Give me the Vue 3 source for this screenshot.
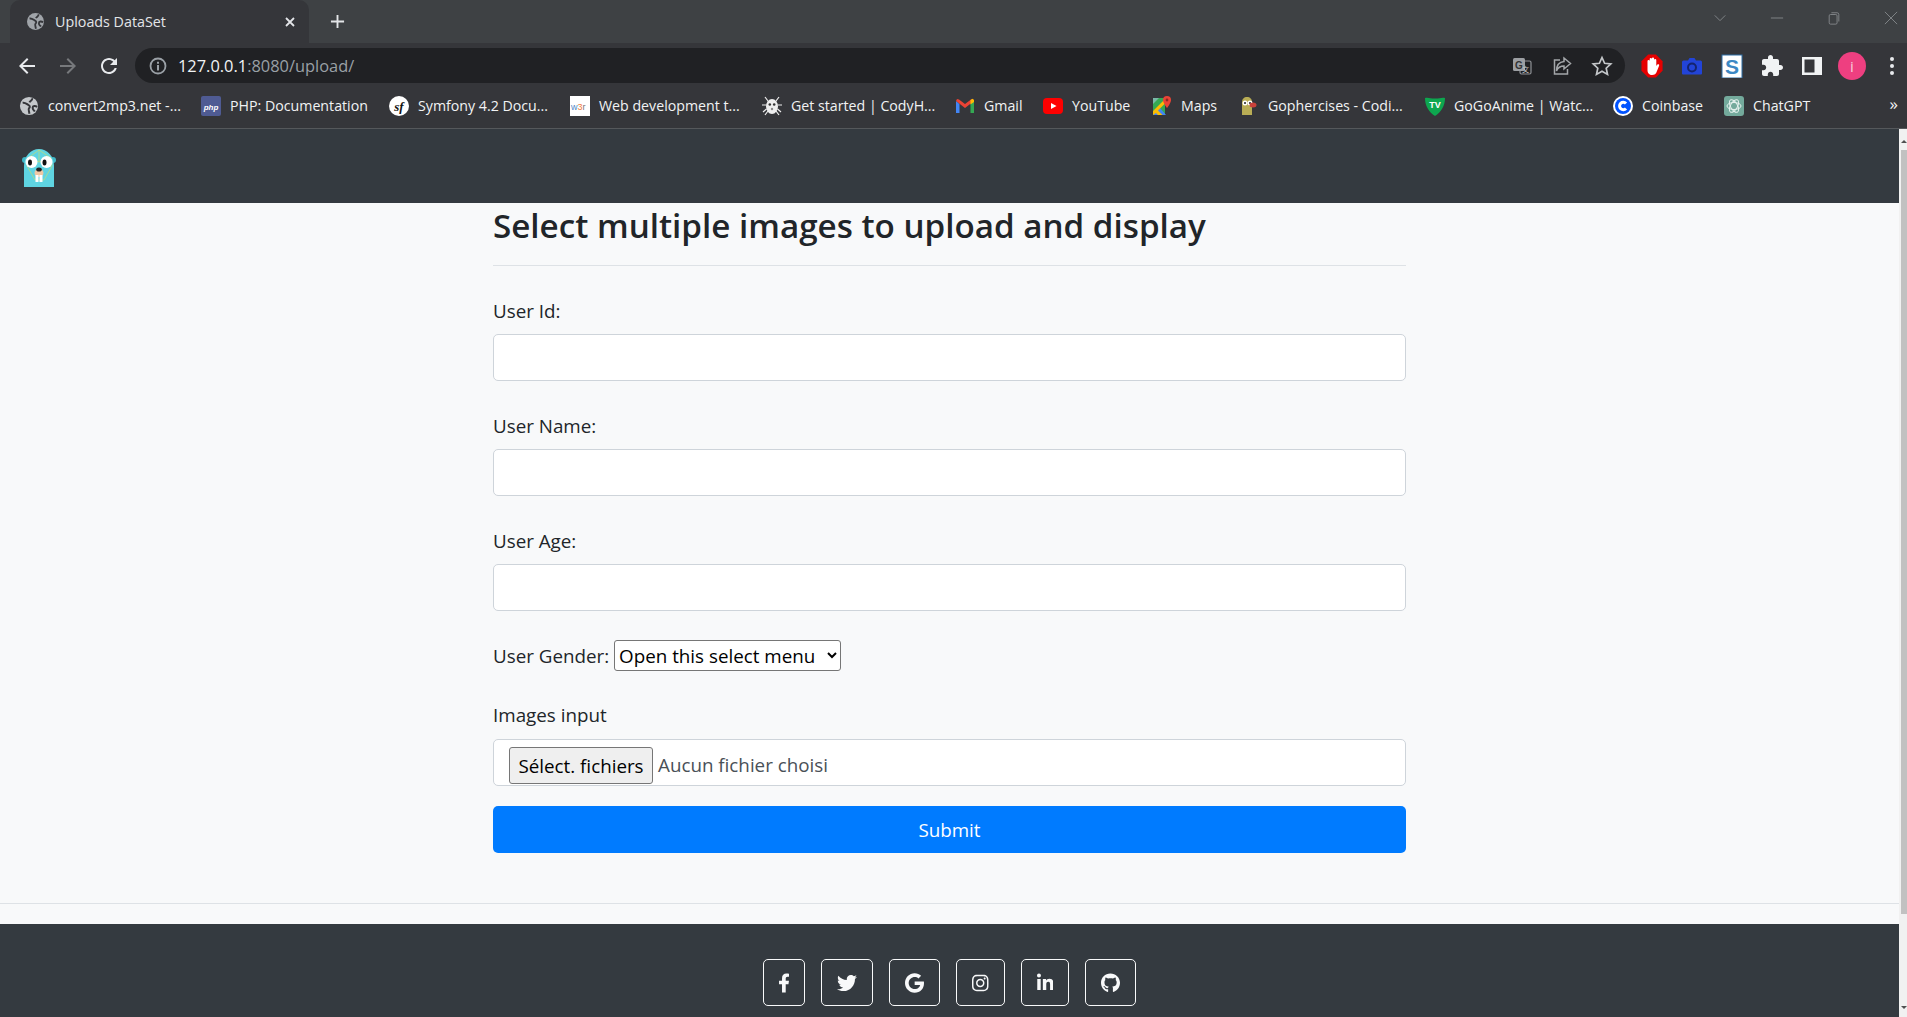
<template>
  <div class="screen">
    <!-- browser chrome -->
    <div class="tabbar">
      <div class="tab">
        <svg class="tab-globe" viewBox="0 0 20 20">
          <circle cx="10" cy="10" r="10" fill="#a0a4a9" />
          <path class="globe-lines" d="M3 6.500c3-.5 4.500 1.500 6.500 2.500s1.500 2.500 .5 3.500 0 3 .5 6M13.500 1.500c.5 2.500-2 2.500-3 4.500M19 11c-2-1.500-5-1.500-5 1s1.500 2.500 2.500 4" />
        </svg>
        <span class="tab-title">Uploads DataSet</span>
        <svg class="tab-close" viewBox="0 0 12 12"><path d="M2 2l8 8M10 2l-8 8" /></svg>
      </div>
      <svg class="tab-new" viewBox="0 0 16 16"><path d="M8 1v14M1 8h14" /></svg>
      <div class="win-controls">
        <svg viewBox="0 0 16 16"><path d="M2 5l6 6 6-6" /></svg>
        <svg viewBox="0 0 16 16"><path d="M1 8h14" /></svg>
        <svg viewBox="0 0 16 16"><path d="M2.500 5.500a1.500 1.500 0 0 1 1.500-1.500h6a1.500 1.500 0 0 1 1.500 1.500v8a1.500 1.500 0 0 1-1.500 1.500h-6a1.500 1.500 0 0 1-1.500-1.500zM5 2h6.500a2 2 0 0 1 2 2v8" /></svg>
        <svg viewBox="0 0 16 16"><path d="M1 1l14 14M15 1L1 15" /></svg>
      </div>
    </div>

    <div class="toolbar">
      <button class="tool">
        <svg viewBox="0 0 24 24"><path fill="#e8eaed" d="M20 11H7.830l5.590-5.590L12 4l-8 8 8 8 1.410-1.410L7.830 13H20v-2z" /></svg>
      </button>
      <button class="tool">
        <svg viewBox="0 0 24 24"><path fill="#77797c" d="M4 11h12.170l-5.590-5.590L12 4l8 8-8 8-1.410-1.410L16.170 13H4v-2z" /></svg>
      </button>
      <button class="tool">
        <svg viewBox="0 0 24 24"><path fill="#e8eaed" d="M17.650 6.350C16.200 4.900 14.210 4 12 4c-4.420 0-7.990 3.580-7.990 8s3.570 8 7.990 8c3.730 0 6.840-2.550 7.730-6h-2.080c-.82 2.330-3.040 4-5.650 4-3.310 0-6-2.690-6-6s2.690-6 6-6c1.660 0 3.140.69 4.220 1.780L13 11h7V4l-2.350 2.350z" /></svg>
      </button>
      <div class="omnibox">
        <svg class="info" viewBox="0 0 18 18">
          <circle cx="9" cy="9" r="7.500" fill="none" stroke="#9aa0a6" stroke-width="1.800" />
          <path d="M8 8h2v5.500H8zM8 4.800h2v2H8z" fill="#9aa0a6" />
        </svg>
        <span class="url"><b>127.0.0.1</b>:8080/upload/</span>
        <div class="omni-actions">
          <svg viewBox="0 0 22 22">
            <rect x="9" y="6" width="11" height="13" rx="1.500" fill="#202124" stroke="#8f9296" stroke-width="1.200" />
            <rect x="2" y="3" width="12" height="13" rx="1.500" fill="#9c9fa3" />
            <text x="8" y="13.500" class="g-mark">G</text>
            <text x="14.500" y="16.500" class="x-mark">文</text>
          </svg>
          <svg viewBox="0 0 22 22" fill="none" stroke="#a3a6a9" stroke-width="1.500">
            <path d="M9 5H3.500v14h13v-5" />
            <path d="M13 3l6.500 5.500L13 14v-3c-3.500 0-6 1.200-7.500 5 0-5.500 2.500-9 7.500-9.500z" />
          </svg>
          <svg viewBox="0 0 22 22" fill="none" stroke="#c4c7ca" stroke-width="1.700">
            <path d="M11 2.500l2.600 5.800 6.200.7-4.600 4.200 1.300 6.200-5.500-3.200-5.500 3.200 1.300-6.200L2.200 9l6.200-.7z" />
          </svg>
        </div>
      </div>
      <div class="extensions">
        <button class="tool">
          <svg viewBox="0 0 24 24">
            <path d="M8 0h8l7 7v10l-7 7H8l-7-7V7z" fill="#e60000" transform="translate(.5 .5) scale(.96)" />
            <path d="M7.500 12V7a1.100 1.100 0 0 1 2.200 0V5a1.100 1.100 0 0 1 2.200 0v-.5a1.100 1.100 0 0 1 2.200 0V6a1.100 1.100 0 0 1 2.200 0v6l1-1.500a1.100 1.100 0 0 1 1.800 1.200L17 17c-1 3-2.500 4-5 4s-4.500-1.500-4.500-5z" fill="#fff" />
          </svg>
        </button>
        <button class="tool">
          <svg viewBox="0 0 24 24">
            <path d="M2 8a1.500 1.500 0 0 1 1.500-1.500H8L9.500 4h5L16 6.500h4.500A1.500 1.500 0 0 1 22 8v11.500a1 1 0 0 1-1 1H3a1 1 0 0 1-1-1z" fill="#2244d8" />
            <circle cx="12" cy="13.500" r="4" fill="none" stroke="#14246e" stroke-width="2" />
          </svg>
        </button>
        <button class="tool">
          <svg viewBox="0 0 24 24">
            <rect x="2" y="1" width="20" height="23" fill="#fff" stroke="#2f6ea5" stroke-width="1" />
            <text x="12" y="19.500" class="s-mark">S</text>
          </svg>
        </button>
        <button class="tool">
          <svg viewBox="0 0 24 24"><path fill="#f1f3f4" d="M20.500 11H19V7c0-1.100-.9-2-2-2h-4V3.500C13 2.120 11.880 1 10.500 1S8 2.120 8 3.500V5H4c-1.100 0-1.990.9-1.990 2v3.800H3.500c1.490 0 2.700 1.210 2.700 2.700s-1.210 2.700-2.700 2.700H2V20c0 1.100.9 2 2 2h3.800v-1.500c0-1.490 1.210-2.700 2.700-2.700 1.490 0 2.700 1.210 2.700 2.700V22H17c1.100 0 2-.9 2-2v-4h1.500c1.380 0 2.500-1.120 2.500-2.500S21.880 11 20.500 11z" /></svg>
        </button>
        <button class="tool">
          <svg viewBox="0 0 24 24">
            <rect x="2" y="3" width="20" height="18" fill="#f1f3f4" />
            <rect x="4.500" y="5.500" width="10" height="13" fill="#35363a" />
          </svg>
        </button>
        <button class="tool"><span class="avatar">i</span></button>
        <button class="tool">
          <svg viewBox="0 0 24 24" fill="#e8eaed">
            <circle cx="12" cy="5" r="2" /><circle cx="12" cy="12" r="2" /><circle cx="12" cy="19" r="2" />
          </svg>
        </button>
      </div>
    </div>

    <div class="bookmarks">
      <div v-for="b in bookmarks" :key="b.icon" class="bookmark" :style="{ width: b.w + 'px' }">
        <svg v-if="b.icon === 'globe'" class="bm-icon" viewBox="-1 -1 22 22">
          <circle cx="10" cy="10" r="10" fill="#c4c7ca" />
          <path class="globe-lines" d="M3 6.500c3-.5 4.500 1.500 6.500 2.500s1.500 2.500 .5 3.500 0 3 .5 6M13.500 1.500c.5 2.500-2 2.500-3 4.500M19 11c-2-1.500-5-1.500-5 1s1.500 2.500 2.500 4" />
        </svg>
        <svg v-else-if="b.icon === 'php'" class="bm-icon" viewBox="0 0 20 20">
          <rect width="20" height="20" rx="2" fill="#4f5b93" />
          <text x="10" y="13.500" class="php-mark">php</text>
        </svg>
        <svg v-else-if="b.icon === 'sf'" class="bm-icon" viewBox="0 0 20 20">
          <circle cx="10" cy="10" r="10" fill="#fff" />
          <text x="10" y="14.500" class="sf-mark">sf</text>
        </svg>
        <svg v-else-if="b.icon === 'w3r'" class="bm-icon" viewBox="0 0 20 20">
          <rect width="20" height="20" fill="#fff" />
          <text x="1" y="13.500" class="w3-mark"><tspan fill="#4f87c7">w</tspan><tspan fill="#ef7b3e">3</tspan><tspan fill="#777">r</tspan></text>
        </svg>
        <svg v-else-if="b.icon === 'bug'" class="bm-icon" viewBox="0 0 20 20">
          <path d="M3 1l3 4M17 1l-3 4M0 9h4M20 9h-4M1 16l3.500-3M19 16l-3.500-3M3 19l3-4M17 19l-3-4" stroke="#eee" stroke-width="1.200" fill="none" />
          <ellipse cx="10" cy="10.500" rx="6" ry="7.500" fill="#eee" />
          <circle cx="7.800" cy="8.500" r="1.300" fill="#333" /><circle cx="12.200" cy="8.500" r="1.300" fill="#333" />
          <circle cx="10" cy="13" r="1.200" fill="#888" />
        </svg>
        <svg v-else-if="b.icon === 'gmail'" class="bm-icon" viewBox="0 0 20 20">
          <path d="M1 5v12h3.500V8z" fill="#4285f4" />
          <path d="M19 5v12h-3.500V8z" fill="#34a853" />
          <path d="M1 5l9 7 9-7-1-2-2 .5-6 4.500-6-4.500L2 3z" fill="#ea4335" />
          <path d="M15.500 4l2-1.200L19 4v2l-3.500 2.500z" fill="#fbbc04" />
        </svg>
        <svg v-else-if="b.icon === 'yt'" class="bm-icon" viewBox="0 0 20 20">
          <rect y="2" width="20" height="16" rx="4" fill="#f00" />
          <path d="M8 7l5.500 3L8 13z" fill="#fff" />
        </svg>
        <svg v-else-if="b.icon === 'maps'" class="bm-icon" viewBox="0 0 20 20">
          <path d="M1 2h12v17H1z" fill="#34a853" />
          <path d="M1 19l7-7 6 7z" fill="#4285f4" />
          <path d="M1 15L13 3v4.500L6 14.500l4.500 4.500H6l-2-2-3 2z" fill="#fbbc04" />
          <path d="M1 2h6L1 8z" fill="#7ab8a8" />
          <path d="M15 0a4 4 0 0 1 4 4c0 3-4 8-4 8s-4-5-4-8a4 4 0 0 1 4-4z" fill="#ea4335" />
          <circle cx="15" cy="4" r="1.400" fill="#8c2a22" />
        </svg>
        <svg v-else-if="b.icon === 'gopher'" class="bm-icon" viewBox="0 0 20 20">
          <path d="M3 19V6c0-3 2-5 5-5s5 2 5 5v13z" fill="#b9ad55" />
          <circle cx="6" cy="7" r="2.500" fill="#fff" /><circle cx="11" cy="7" r="2.500" fill="#fff" />
          <circle cx="6" cy="7" r="1" fill="#222" /><circle cx="11" cy="7" r="1" fill="#222" />
          <ellipse cx="14" cy="9" rx="3.500" ry="2.500" fill="#c9413a" />
        </svg>
        <svg v-else-if="b.icon === 'tv'" class="bm-icon" viewBox="0 0 20 20">
          <path d="M0 2c3-1 5 .5 10 .5S17 1 20 2c0 8-4 14-10 18C4 16 0 10 0 2z" fill="#0da64f" />
          <text x="10" y="12" class="tv-mark">TV</text>
        </svg>
        <svg v-else-if="b.icon === 'coin'" class="bm-icon" viewBox="0 0 20 20">
          <circle cx="10" cy="10" r="10" fill="#fff" />
          <circle cx="10" cy="10" r="8" fill="#0052ff" />
          <path d="M13 7.500a3.700 3.700 0 1 0 0 5" fill="none" stroke="#fff" stroke-width="3" />
        </svg>
        <svg v-else class="bm-icon" viewBox="0 0 20 20">
          <rect width="20" height="20" rx="3" fill="#74aa9c" />
          <g fill="none" stroke="#e6f1ee" stroke-width="1">
            <ellipse cx="10" cy="10" rx="7" ry="3.500" />
            <ellipse cx="10" cy="10" rx="7" ry="3.500" transform="rotate(60 10 10)" />
            <ellipse cx="10" cy="10" rx="7" ry="3.500" transform="rotate(120 10 10)" />
          </g>
        </svg>
        <span class="bm-label">{{ b.label }}</span>
      </div>
      <span class="bm-more">»</span>
    </div>

    <!-- page with its scrollbar -->
    <div class="viewport">
      <div class="page">
        <nav class="navbar">
          <svg class="logo" viewBox="0 0 34 38">
            <circle cx="3" cy="11" r="3" fill="#3fb6c6" /><circle cx="31" cy="11" r="3" fill="#3fb6c6" />
            <path d="M2 38V17C2 7 9 0 17 0s15 7 15 17v21z" fill="#5fd4e2" />
            <path d="M17 1l12 8 1 8-8 14h-9L5 17l1-8zM17 1v12M6 9l11 4 12-4" fill="none" stroke="#c5dc72" stroke-width=".7" />
            <circle cx="9.500" cy="13" r="6" fill="#fff" /><circle cx="24.500" cy="13" r="6" fill="#fff" />
            <ellipse cx="8" cy="13.500" rx="2" ry="3" fill="#111" /><ellipse cx="22.500" cy="13.500" rx="2" ry="3" fill="#111" />
            <ellipse cx="17" cy="24" rx="4.500" ry="4" fill="#f0c7a4" />
            <ellipse cx="17" cy="20.500" rx="2.800" ry="2" fill="#222" />
            <rect x="13.500" y="26" width="3" height="7" fill="#fff" /><rect x="17.500" y="26" width="3" height="7" fill="#fff" />
          </svg>
        </nav>

        <main class="content">
          <h2>Select multiple images to upload and display</h2>
          <hr class="title-rule" />
          <form class="upload-form" @submit.prevent>
            <div v-for="f in fields" :key="f" class="group">
              <label>{{ f }}</label>
              <input class="control" type="text" />
            </div>
            <div class="gender-row">
              <label>User Gender:</label>
              <select class="native-select">
                <option>Open this select menu</option>
              </select>
            </div>
            <label class="images-label">Images input</label>
            <div class="control file-control">
              <button type="button" class="file-btn">Sélect. fichiers</button>
              <span class="file-name">Aucun fichier choisi</span>
            </div>
            <button type="submit" class="submit">Submit</button>
          </form>
        </main>

        <hr class="footer-rule" />

        <footer class="footer">
          <a v-for="s in socials" :key="s.name" class="social" href="#" @click.prevent>
            <svg :viewBox="s.box" :style="{ width: s.w + 'px' }"><path :d="s.d" /></svg>
          </a>
        </footer>
      </div>

      <div class="scrollbar">
        <span class="sb-up"></span>
        <span class="sb-thumb"></span>
        <span class="sb-down"></span>
      </div>
    </div>
  </div>
</template>

<script setup>
const bookmarks = [
  { icon: 'globe', label: 'convert2mp3.net -...', w: 161 },
  { icon: 'php', label: 'PHP: Documentation', w: 167 },
  { icon: 'sf', label: 'Symfony 4.2 Docu...', w: 160 },
  { icon: 'w3r', label: 'Web development t...', w: 171 },
  { icon: 'bug', label: 'Get started | CodyH...', w: 172 },
  { icon: 'gmail', label: 'Gmail', w: 67 },
  { icon: 'yt', label: 'YouTube', w: 88 },
  { icon: 'maps', label: 'Maps', w: 66 },
  { icon: 'gopher', label: 'Gophercises - Codi...', w: 165 },
  { icon: 'tv', label: 'GoGoAnime | Watc...', w: 167 },
  { icon: 'coin', label: 'Coinbase', w: 90 },
  { icon: 'gpt', label: 'ChatGPT', w: 88 }
]

const fields = ['User Id:', 'User Name:', 'User Age:']

const socials = [
  { name: 'facebook', box: '22 0 272 512', w: 10, d: 'M279.140 288l14.220-92.660h-88.910v-60.130c0-25.350 12.420-50.060 52.240-50.060h40.420V6.260S260.430 0 225.360 0c-73.220 0-121.080 44.380-121.080 124.720v70.620H22.890V288h81.390v224h100.170V288z' },
  { name: 'twitter', box: '0 0 512 512', w: 20, d: 'M459.370 151.716c.325 4.548.325 9.097.325 13.645 0 138.720-105.583 298.558-298.558 298.558-59.452 0-114.680-17.219-161.137-47.106 8.447.974 16.568 1.299 25.340 1.299 49.055 0 94.213-16.568 130.274-44.832-46.132-.975-84.792-31.188-98.112-72.772 6.498.974 12.995 1.624 19.818 1.624 9.421 0 18.843-1.300 27.614-3.573-48.081-9.747-84.143-51.980-84.143-102.985v-1.299c13.969 7.797 30.214 12.670 47.431 13.319-28.264-18.843-46.781-51.005-46.781-87.391 0-19.492 5.197-37.360 14.294-52.954 51.655 63.675 129.300 105.258 216.365 109.807-1.624-7.797-2.599-15.918-2.599-24.040 0-57.828 46.782-104.934 104.934-104.934 30.213 0 57.502 12.670 76.670 33.137 23.715-4.548 46.456-13.320 66.599-25.340-7.798 24.366-24.366 44.833-46.132 57.827 21.117-2.273 41.584-8.122 60.426-16.243-14.292 20.791-32.161 39.308-52.628 54.253z' },
  { name: 'google', box: '0 0 488 512', w: 19, d: 'M488 261.800C488 403.300 391.100 504 248 504 110.800 504 0 393.200 0 256S110.800 8 248 8c66.800 0 123 24.500 166.300 64.900l-67.500 64.900C258.500 52.600 94.300 116.600 94.300 256c0 86.500 69.100 156.600 153.700 156.600 98.200 0 135-70.400 140.800-106.900H248v-85.300h236.100c2.300 12.700 3.900 24.900 3.900 41.400z' },
  { name: 'instagram', box: '0 0 448 512', w: 16.500, d: 'M224.100 141c-63.600 0-114.900 51.300-114.900 114.900s51.300 114.900 114.900 114.900S339 319.500 339 255.900 287.700 141 224.100 141zm0 189.600c-41.100 0-74.700-33.500-74.700-74.700s33.500-74.700 74.700-74.700 74.700 33.500 74.700 74.700-33.600 74.700-74.700 74.700zm146.400-194.300c0 14.900-12 26.800-26.800 26.800-14.900 0-26.800-12-26.800-26.800s12-26.800 26.800-26.800 26.800 12 26.800 26.800zm76.100 27.200c-1.700-35.900-9.900-67.700-36.200-93.900-26.200-26.200-58-34.400-93.900-36.200-37-2.100-147.900-2.100-184.900 0-35.800 1.700-67.600 9.900-93.900 36.100s-34.400 58-36.200 93.900c-2.100 37-2.100 147.900 0 184.900 1.700 35.900 9.900 67.700 36.200 93.900s58 34.400 93.900 36.200c37 2.100 147.900 2.100 184.900 0 35.900-1.700 67.700-9.900 93.900-36.200 26.200-26.200 34.400-58 36.200-93.900 2.100-37 2.100-147.800 0-184.800zM398.800 388c-7.800 19.600-22.900 34.700-42.600 42.600-29.500 11.700-99.500 9-132.100 9s-102.700 2.600-132.100-9c-19.600-7.800-34.700-22.900-42.600-42.600-11.700-29.500-9-99.500-9-132.100s-2.600-102.700 9-132.100c7.800-19.600 22.900-34.700 42.600-42.600 29.500-11.700 99.500-9 132.100-9s102.700-2.600 132.100 9c19.600 7.800 34.700 22.900 42.600 42.600 11.700 29.500 9 99.500 9 132.100s2.700 102.700-9 132.100z' },
  { name: 'linkedin', box: '0 0 448 512', w: 16.500, d: 'M100.280 448H7.400V148.900h92.880zM53.790 108.100C24.090 108.100 0 83.500 0 53.800a53.790 53.790 0 0 1 107.580 0c0 29.700-24.100 54.300-53.790 54.300zM447.900 448h-92.680V302.400c0-34.700-.7-79.200-48.290-79.200-48.290 0-55.690 37.700-55.690 76.700V448h-92.780V148.900h89.080v40.800h1.300c12.400-23.500 42.690-48.300 87.880-48.300 94 0 111.280 61.900 111.280 142.300V448z' },
  { name: 'github', box: '0 0 496 512', w: 19, d: 'M165.900 397.400c0 2-2.300 3.600-5.200 3.600-3.300 0-5.600-1.600-5.600-3.600 0-2 2.300-3.600 5.200-3.600 3-.3 5.600 1.300 5.600 3.600zm-31.100-4.500c-.7 2 1.300 4.300 4.300 4.900 2.600 1 5.600 0 6.200-2s-1.300-4.300-4.300-5.200c-2.600-.7-5.500.3-6.200 2.300zm44.200-1.700c-2.900.7-4.900 2.600-4.600 4.900.3 2 2.900 3.300 5.900 2.600 2.900-.7 4.900-2.600 4.600-4.600-.3-1.900-3-3.200-5.900-2.900zM244.800 8C106.100 8 0 113.300 0 252c0 110.900 69.800 205.800 169.500 239.200 12.800 2.300 17.300-5.600 17.300-12.100 0-6.200-.3-40.400-.3-61.400 0 0-70 15-84.700-29.800 0 0-11.400-29.100-27.800-36.600 0 0-22.900-15.700 1.600-15.400 0 0 24.900 2 38.600 25.800 21.900 38.600 58.600 27.500 72.900 20.900 2.300-16 8.800-27.100 16-33.700-55.900-6.200-112.300-14.300-112.300-110.500 0-27.500 7.600-41.300 23.600-58.900-2.600-6.500-11.100-33.300 2.600-67.900 20.900-6.500 69 27 69 27 20-5.600 41.500-8.500 62.800-8.500s42.800 2.900 62.800 8.500c0 0 48.100-33.600 69-27 13.700 34.700 5.200 61.400 2.600 67.900 16 17.700 25.800 31.500 25.800 58.900 0 96.500-58.900 104.200-114.800 110.500 9.200 7.900 17 22.900 17 46.400 0 33.700-.3 75.400-.3 83.600 0 6.500 4.600 14.400 17.300 12.100C428.200 457.800 496 362.900 496 252 496 113.300 383.500 8 244.800 8z' }
]
</script>

<style>
html, body { margin: 0; height: 100%; overflow: hidden; }
</style>

<style scoped>
.screen {
  height: 100vh;
  display: flex;
  flex-direction: column;
  font-family: "Open Sans", "Liberation Sans", sans-serif;
  color: #212529;
  overflow: hidden;
}
button { border: none; background: none; padding: 0; font-family: inherit; }

/* tab strip */
.tabbar {
  height: 43px;
  flex: none;
  display: flex;
  align-items: flex-end;
  background: #3e4144;
  padding-left: 10px;
}
.tab {
  width: 299px;
  height: 43px;
  box-sizing: border-box;
  background: #35363a;
  border-radius: 10px 10px 0 0;
  display: flex;
  align-items: center;
  padding: 0 13px 0 17px;
  color: #e3e5e8;
  font-size: 14.300px;
}
.tab-globe { width: 17px; height: 17px; flex: none; }
.globe-lines { fill: none; stroke: #35363a; stroke-width: 2.200; }
.tab-title { margin-left: 11px; flex: 1; }
.tab-close { width: 12px; height: 12px; stroke: #e3e5e8; stroke-width: 1.800; fill: none; }
.tab-new {
  width: 15px;
  height: 15px;
  margin: 0 0 14px 21px;
  stroke: #e3e5e8;
  stroke-width: 2;
  fill: none;
}
.win-controls {
  margin-left: auto;
  align-self: flex-start;
  display: flex;
  gap: 43px;
  padding: 11px 9px 0 0;
}
.win-controls svg {
  width: 14px;
  height: 14px;
  stroke: #888b8f;
  stroke-width: 1;
  fill: none;
}

/* toolbar */
.toolbar {
  height: 40px;
  flex: none;
  display: flex;
  align-items: flex-end;
  background: #35363a;
  padding-left: 7px;
}
.tool {
  width: 40px;
  height: 35px;
  flex: none;
  display: flex;
  align-items: center;
  justify-content: center;
}
.tool svg { width: 24px; height: 24px; }
.tool + .tool { margin-left: 1px; }
.omnibox {
  width: 1490px;
  height: 35px;
  margin-left: 6px;
  flex: none;
  background: #202124;
  border-radius: 18px;
  display: flex;
  align-items: center;
  padding: 0 12px 0 14px;
  box-sizing: border-box;
}
.info { width: 18px; height: 18px; flex: none; }
.url { margin-left: 11px; font-size: 16.400px; color: #9aa0a6; }
.url b { font-weight: 400; color: #f1f3f4; }
.omni-actions { margin-left: auto; display: flex; gap: 18px; }
.omni-actions svg { width: 22px; height: 22px; }
.g-mark { font-size: 10px; font-weight: 700; fill: #333; text-anchor: middle; font-family: "Liberation Sans", sans-serif; }
.x-mark { font-size: 7px; fill: #c8c8c8; text-anchor: middle; font-family: "Noto Sans CJK SC", sans-serif; }
.extensions { display: flex; margin-left: 7px; }
.extensions .tool + .tool { margin-left: 0; }
.s-mark { font-size: 21px; font-weight: 700; fill: #3c88c4; text-anchor: middle; font-family: "Liberation Sans", sans-serif; }
.avatar {
  width: 28px;
  height: 28px;
  border-radius: 50%;
  background: #ee3f80;
  color: #f7c9da;
  font-size: 15px;
  display: flex;
  align-items: center;
  justify-content: center;
}

/* bookmarks */
.bookmarks {
  height: 46px;
  flex: none;
  box-sizing: border-box;
  border-bottom: 1px solid #55585b;
  display: flex;
  align-items: center;
  gap: 21px;
  background: #35363a;
  padding-left: 19px;
  color: #f1f3f4;
  font-size: 14.200px;
  position: relative;
}
.bookmark { display: flex; align-items: center; gap: 9px; flex: none; white-space: nowrap; }
.bm-icon { width: 20px; height: 20px; flex: none; }
.bm-more { position: absolute; right: 9px; top: 9px; font-size: 17px; }
.php-mark { font: italic 700 8px "Liberation Sans", sans-serif; fill: #fff; text-anchor: middle; }
.sf-mark { font: italic 700 13px "Liberation Serif", serif; fill: #111; text-anchor: middle; }
.w3-mark { font: 400 9px "Liberation Sans", sans-serif; }
.tv-mark { font: 700 9px "Liberation Sans", sans-serif; fill: #fff; text-anchor: middle; }

/* page */
.viewport { flex: 1; min-height: 0; display: flex; }
.page { flex: 1; min-width: 0; background: #f8f9fa; display: flex; flex-direction: column; }
.navbar {
  height: 74px;
  flex: none;
  background: #343a40;
  padding: 20px 0 0 22px;
  box-sizing: border-box;
}
.logo { width: 34px; height: 38px; display: block; }
.content { width: 913px; margin: 0 auto; flex: none; }
h2 { margin: 0; height: 46px; font-size: 33.200px; line-height: 46px; font-weight: 600; color: #212529; }
.title-rule { margin: 16px 0 29px; border: 0; border-top: 1px solid #dee2e6; }
label { display: block; font-size: 18.800px; line-height: 30px; padding-top: 1px; margin-bottom: 8px; }
.images-label { padding: 0 0 1px; }
.group { margin-bottom: 29px; }
.control {
  display: block;
  width: 100%;
  height: 47px;
  box-sizing: border-box;
  background: #fff;
  border: 1px solid #ced4da;
  border-radius: 5px;
}
.gender-row { display: flex; align-items: center; gap: 5px; height: 31px; margin-bottom: 29px; }
.gender-row label { margin: 0; }
.native-select {
  width: 227px;
  height: 31px;
  font: 18.800px "Open Sans", sans-serif;
  color: #000;
  background: #fff;
  border: 1px solid #767676;
  border-radius: 3px;
  padding: 0;
}
.file-control { display: flex; align-items: flex-start; padding: 7px 15px 0; }
.file-btn {
  width: 144px;
  height: 37px;
  flex: none;
  background: #efefef;
  border: 1px solid #767676;
  border-radius: 3px;
  color: #000;
  font-size: 18.800px;
}
.file-name { margin-left: 5px; font-size: 18.800px; line-height: 37px; color: #495057; }
.submit {
  display: block;
  width: 100%;
  height: 47px;
  margin-top: 20px;
  padding-top: 1px;
  background: #007bff;
  color: #fff;
  font-size: 18.800px;
  border-radius: 5px;
}
.footer-rule { width: 100%; margin: 50px 0 20px; border: 0; border-top: 1px solid #dee2e6; }
.footer {
  flex: 1;
  background: #343a40;
  display: flex;
  justify-content: center;
  align-items: flex-start;
  gap: 16px;
  padding-top: 35px;
}
.social {
  height: 47px;
  box-sizing: border-box;
  padding: 0 15px;
  border: 1px solid #f8f9fa;
  border-radius: 5px;
  display: flex;
  align-items: center;
}
.social svg { height: 20px; fill: #f8f9fa; display: block; }

/* scrollbar */
.scrollbar {
  width: 8px;
  flex: none;
  background: #f1f1f1;
  display: flex;
  flex-direction: column;
  align-items: flex-end;
}
.sb-up {
  width: 0;
  margin: 11px 0 7px;
  border-left: 3px solid transparent;
  border-right: 3px solid transparent;
  border-bottom: 3px solid #505050;
}
.sb-thumb { width: 6px; height: 764px; background: #c1c1c1; }
.sb-down {
  width: 0;
  margin: auto 0 8px;
  border-left: 3px solid transparent;
  border-right: 3px solid transparent;
  border-top: 3px solid #505050;
}
</style>
